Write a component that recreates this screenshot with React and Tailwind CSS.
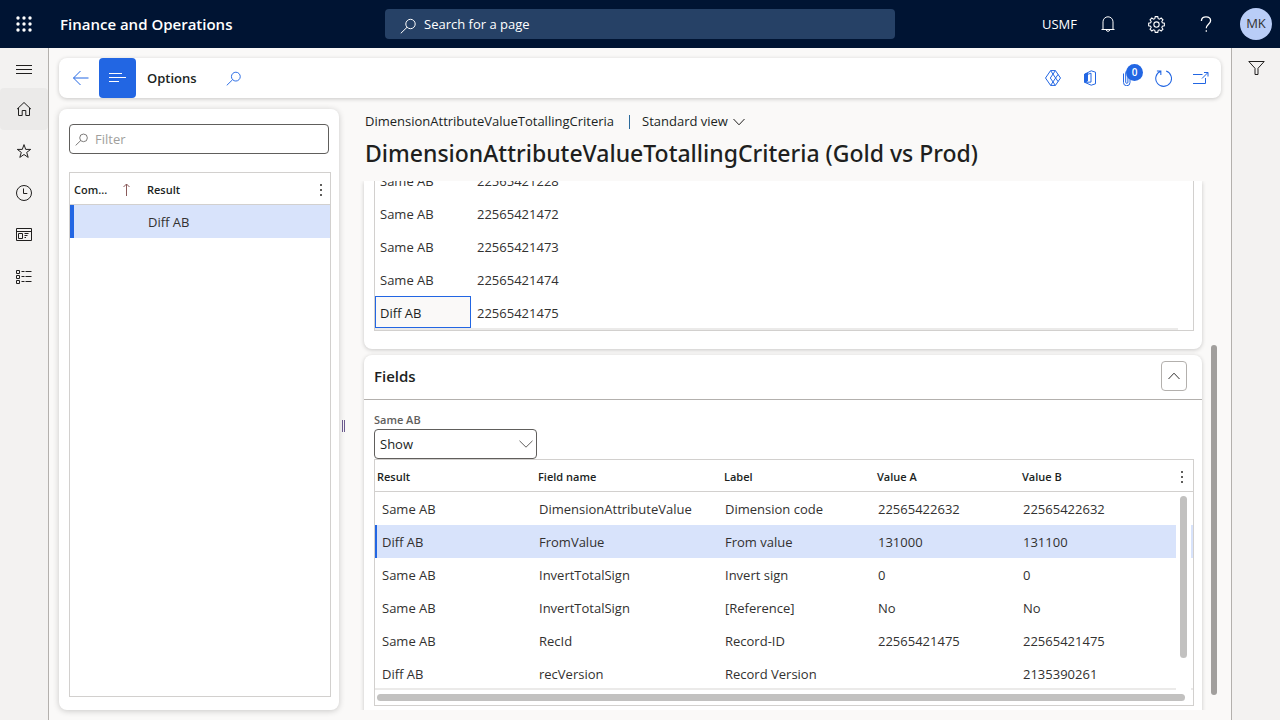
import React from "react";

const searchGlyph = (
  <>
    <circle cx="10.5" cy="6" r="4.7" />
    <path d="M7 9.3 0.8 15.3" />
  </>
);

function Icon({ children, className = "size-4", viewBox = "0 0 16 16" }) {
  return (
    <svg
      aria-hidden="true"
      viewBox={viewBox}
      fill="none"
      stroke="currentColor"
      strokeWidth="1"
      className={`shrink-0 ${className}`}
    >
      {children}
    </svg>
  );
}

const navItems = [
  {
    label: "Home",
    active: true,
    icon: <path d="M1 8.2 8 1.5l7 6.7M2.5 7v7.5h3.7v-5h3.6v5h3.7V7" />,
  },
  {
    label: "Favorites",
    icon: <path d="M8 1.6 9.7 6.4h5L10.7 9.4l1.5 5L8 11.5l-4.2 2.9 1.5-5-4-3h5Z" />,
  },
  {
    label: "Recent",
    icon: (
      <>
        <circle cx="8" cy="8" r="7.5" />
        <path d="M7.5 3.5v5h3.8" />
      </>
    ),
  },
  {
    label: "Workspaces",
    icon: <path d="M.5 1.5h15v12H.5ZM.5 4.5h15M2.5 6.5h4v5h-4ZM8.5 6.5h4M8.5 8.5h3M8.5 10.5h1.5" />,
  },
  {
    label: "Modules",
    icon: <path d="M.5 1.5h3v3h-3ZM.5 6.5h3v3h-3ZM.5 11.5h3v3h-3ZM5.5 2.5h3M9.5 2.5h6M5.5 7.5h3M9.5 7.5h6M5.5 12.5h3M9.5 12.5h6" />,
  },
];

const compareRows = [
  ["Same AB", "22565421228"],
  ["Same AB", "22565421472"],
  ["Same AB", "22565421473"],
  ["Same AB", "22565421474"],
];

const fieldRows = [
  ["Same AB", "DimensionAttributeValue", "Dimension code", "22565422632", "22565422632"],
  ["Diff AB", "FromValue", "From value", "131000", "131100"],
  ["Same AB", "InvertTotalSign", "Invert sign", "0", "0"],
  ["Same AB", "InvertTotalSign", "[Reference]", "No", "No"],
  ["Same AB", "RecId", "Record-ID", "22565421475", "22565421475"],
  ["Diff AB", "recVersion", "Record Version", "", "2135390261"],
];

function MoreDots() {
  return (
    <svg aria-hidden="true" viewBox="0 0 4 14" className="h-[14px] w-1 shrink-0 fill-[#605e5c]">
      <rect x="1" y="1" width="2" height="2" />
      <rect x="1" y="6" width="2" height="2" />
      <rect x="1" y="11" width="2" height="2" />
    </svg>
  );
}

function TopBar() {
  return (
    <header className="flex h-12 shrink-0 items-center bg-[#001433] text-white">
      <div className="flex flex-1 items-center">
        <button type="button" aria-label="App launcher" className="flex size-12 items-center justify-center">
          <svg viewBox="0 0 16 16" className="size-4 fill-white">
            {[2, 8, 14].map((y) =>
              [2, 8, 14].map((x) => <circle key={`${x}-${y}`} cx={x} cy={y} r="1.7" />)
            )}
          </svg>
        </button>
        <span className="pl-3 text-[15px] leading-5 font-semibold">Finance and Operations</span>
      </div>
      <label className="flex h-[30px] w-[40%] max-w-[510px] items-center gap-2 rounded bg-[#264166] px-[15px]">
        <Icon className="mt-1 size-4">{searchGlyph}</Icon>
        <input
          aria-label="Search for a page"
          placeholder="Search for a page"
          className="min-w-0 flex-1 bg-transparent pt-[2px] text-[13px] outline-none placeholder:text-white"
        />
      </label>
      <div className="flex flex-1 items-center justify-end text-[13px]">
        <button type="button" className="px-[6px] pt-[2px]">USMF</button>
        <button type="button" aria-label="Notifications" className="flex h-12 w-[49px] items-center justify-center">
          <Icon>
            <path d="M1.5 13.5h13M3 13.5V5.8a5 5 0 0 1 10 0v7.7M6.2 14a1.9 1.9 0 0 0 3.6 0" />
          </Icon>
        </button>
        <button type="button" aria-label="Settings" className="flex h-12 w-[49px] items-center justify-center">
          <Icon className="size-[17px]">
            <path d="M6.8.6h2.4l.4 1.9 1.2.5 1.6-1.1 1.7 1.7L13 5.2l.5 1.2 1.9.4v2.4l-1.9.4-.5 1.2 1.1 1.6-1.7 1.7-1.6-1.1-1.2.5-.4 1.9H6.8l-.4-1.9-1.2-.5-1.6 1.1-1.7-1.7L3 10.8l-.5-1.2-1.9-.4V6.8l1.9-.4L3 5.2 1.9 3.6l1.7-1.7L5.2 3l1.2-.5Z" />
            <circle cx="8" cy="8" r="2.5" />
          </Icon>
        </button>
        <button type="button" aria-label="Help" className="flex h-12 w-[49px] items-center justify-center">
          <Icon>
            <path
              strokeWidth="1.3"
              d="M3.4 5C3.4 2.2 5.4.8 8 .8s4.6 1.5 4.6 3.9c0 3-4.3 3.6-4.3 7.6M8.3 14.2v1.6"
            />
          </Icon>
        </button>
        <button type="button" className="mr-2 ml-[10px] flex size-8 items-center justify-center rounded-full bg-[#b9cdf7] text-[#323130]">
          MK
        </button>
      </div>
    </header>
  );
}

function SideNav() {
  return (
    <nav className="flex w-[49px] shrink-0 flex-col border-r border-[#b3b0ad] bg-[#f3f2f1] text-[#201f1e]">
      <button type="button" aria-label="Expand the navigation pane" className="flex h-10 items-center justify-center">
        <Icon>
          <path d="M0 5.5h16M0 9.5h16M0 13.5h16" />
        </Icon>
      </button>
      {navItems.map((item) => (
        <button
          key={item.label}
          type="button"
          aria-label={item.label}
          className={`flex h-[42px] items-center justify-center rounded ${item.active ? "bg-[#ebeae9]" : ""}`}
        >
          <Icon>{item.icon}</Icon>
        </button>
      ))}
    </nav>
  );
}

function ActionBar() {
  const button = "flex h-10 w-[37px] items-center justify-center";
  return (
    <div className="flex h-10 shrink-0 items-center rounded-lg bg-white pr-[2px] pl-[3px] text-[#2266e3] shadow-[0_1px_4px_rgba(0,0,0,0.2)]">
      <button type="button" aria-label="Back" className={button}>
        <Icon>
          <path d="M15.5 8H.5M7.5 1 .5 8l7 7" />
        </Icon>
      </button>
      <button type="button" aria-label="Show list" className={`${button} rounded bg-[#2266e3] text-white`}>
        <Icon className="h-4 w-[18px]" viewBox="0 0 18 16">
          <path d="M0 3.5h13M0 7.5h17M0 11.5h10" />
        </Icon>
      </button>
      <button type="button" className="px-[11px] pt-[2px] text-[13px] font-semibold text-[#201f1e]">Options</button>
      <button type="button" aria-label="Search actions" className="ml-[10px] flex h-10 w-8 items-center justify-center">
        <Icon className="size-[15px]">{searchGlyph}</Icon>
      </button>
      <div className="ml-auto flex items-center">
        <button type="button" aria-label="Power Apps" className={button}>
          <Icon>
            <path d="M5.6.6h4.8L15.5 8l-5.1 7.4H5.6L.5 8ZM10.4.6 5.3 8l5.1 7.4M5.6.6l7.4 10.9M5.6 15.4 13 4.5" />
          </Icon>
        </button>
        <button type="button" aria-label="Open in Microsoft Office" className={button}>
          <Icon>
            <path d="M2.5 4.3 9.2.8l4.3 1.4v11.6l-4.3 1.4-6.5-2.9 6.3-.2V3.2L5.5 4.4v6.4l-3 1.3Z" />
            <path d="M2.5 4.3 5.5 3v7.8l-3 1.3Z" fill="currentColor" />
          </Icon>
        </button>
        <button type="button" aria-label="Attachments" className={`${button} relative`}>
          <Icon>
            <path d="M4.5 3.5v9a3.2 3.2 0 0 0 6.5 0V2.8a2 2 0 0 0-4.3 0v9.4a1 1 0 0 0 2.2 0V4" />
          </Icon>
          <span className="absolute top-[6px] right-[2px] flex size-[17px] items-center justify-center rounded-full bg-[#2266e3] text-[10px] font-semibold text-white">
            0
          </span>
        </button>
        <button type="button" aria-label="Refresh" className={button}>
          <Icon className="size-[17px]">
            <path d="M10.5 1a7.4 7.4 0 1 1-5.3.2M1.8.9h3.7v3.8" />
          </Icon>
        </button>
        <button type="button" aria-label="Open in new window" className={button}>
          <Icon>
            <path d="M9.5 4.5h-10v9h13V8M9 8.5l5.8-5.8M11 2.5h4v4" />
          </Icon>
        </button>
      </div>
    </div>
  );
}

function ListPane() {
  return (
    <section className="flex w-[280px] shrink-0 flex-col gap-[18px] rounded-lg bg-white pt-[15px] pr-2 pb-[13px] pl-[10px] shadow-[0_1px_6px_rgba(0,0,0,0.2)]">
      <label className="mr-[2px] flex h-[30px] items-center gap-[7px] rounded border border-[#605e5c] px-[5px] text-[#605e5c]">
        <Icon className="size-[13px]">{searchGlyph}</Icon>
        <input
          aria-label="Filter"
          placeholder="Filter"
          className="min-w-0 flex-1 bg-transparent pt-[2px] text-[13px] outline-none placeholder:text-[#a19f9d]"
        />
      </label>
      <div className="flex-1 border border-[#d2d0ce]">
        <table className="w-full table-fixed text-left">
          <colgroup>
            <col className="w-[75px]" />
            <col />
          </colgroup>
          <thead>
            <tr className="h-8 text-[11px] font-semibold text-[#201f1e] shadow-[inset_0_-1px_0_#d2d0ce]">
              <th className="pt-[2px] pr-[15px] pb-0 pl-1 font-semibold">
                <span className="flex items-center justify-between">
                  Com...
                  <Icon className="h-[13px] w-[7px] text-[#8a5a5a]" viewBox="0 0 7 13">
                    <path d="M3.5 12V0M.5 3l3-3 3 3" />
                  </Icon>
                </span>
              </th>
              <th className="pt-[2px] pr-[7px] pb-0 pl-[2px] font-semibold">
                <span className="flex items-center justify-between">
                  Result
                  <MoreDots />
                </span>
              </th>
            </tr>
          </thead>
          <tbody>
            <tr className="h-[33px] bg-[#d8e3fb] text-[13px] text-[#323130]">
              <td className="p-0 shadow-[inset_4px_0_0_#2266e3]" />
              <td className="pt-[2px] pb-0 pl-[3px]">Diff AB</td>
            </tr>
          </tbody>
        </table>
      </div>
    </section>
  );
}

function CompareCard() {
  return (
    <section className="shrink-0 rounded-b-lg bg-white px-[10px] pr-2 pb-[18px] shadow-[0_1px_4px_rgba(0,0,0,0.2)]">
      <div className="relative flex h-[150px] flex-col justify-end overflow-hidden border-x border-b border-[#d2d0ce] pb-px">
        <table className="w-full shrink-0 table-fixed text-left text-[13px] text-[#323130]">
          <colgroup>
            <col className="w-24" />
            <col />
          </colgroup>
          <tbody>
            {compareRows.map(([result, id]) => (
              <tr key={id} className="h-[33px]">
                <td className="pt-[2px] pb-0 pl-[5px]">{result}</td>
                <td className="pt-[2px] pb-0 pl-[6px]">{id}</td>
              </tr>
            ))}
            <tr className="h-[33px]">
              <td className="p-0 align-top">
                <input
                  aria-label="Result"
                  defaultValue="Diff AB"
                  className="block h-8 w-full border border-[#2266e3] bg-[#faf9f8] px-1 pt-[2px] text-[#201f1e] outline-none"
                />
              </td>
              <td className="pt-[2px] pb-0 pl-[6px]">22565421475</td>
            </tr>
          </tbody>
        </table>
        <div className="absolute right-[15px] bottom-0 left-0 h-[2px] bg-[#ebeae9]" />
      </div>
    </section>
  );
}

function FieldsCard() {
  return (
    <section className="shrink-0 rounded-t-lg bg-white pb-5 shadow-[0_1px_4px_rgba(0,0,0,0.2)]">
      <div className="flex h-[45px] items-center justify-between border-b border-[#b3b0ad] pr-[15px] pb-[2px] pl-[10px]">
        <h2 className="text-[15px] leading-5 font-semibold text-[#201f1e]">Fields</h2>
        <button
          type="button"
          aria-label="Collapse Fields"
          className="flex h-[30px] w-[26px] items-center justify-center rounded border border-[#b3b0ad] text-[#323130]"
        >
          <Icon className="h-2 w-3" viewBox="0 0 12 8">
            <path d="M.5 7 6 1.2 11.5 7" />
          </Icon>
        </button>
      </div>
      <div className="pt-[11px] pr-2 pl-[10px]">
        <label htmlFor="same-ab" className="block text-[11px] leading-[18px] font-semibold text-[#605e5c]">
          Same AB
        </label>
        <div className="relative w-[163px]">
          <select
            id="same-ab"
            className="block h-[30px] w-full appearance-none rounded border border-[#605e5c] bg-white pt-[2px] pr-6 pl-[5px] text-[13px] text-[#201f1e]"
          >
            <option>Show</option>
            <option>Hide</option>
          </select>
          <Icon
            className="pointer-events-none absolute top-[11px] right-1 h-2 w-[14px] text-[#605e5c]"
            viewBox="0 0 14 8"
          >
            <path d="M.5.8 7 7.2 13.5.8" />
          </Icon>
        </div>
        <div className="relative border border-[#d2d0ce] pb-[15px]">
          <table className="w-full table-fixed text-left">
            <colgroup>
              <col className="w-[161px]" />
              <col className="w-[186px]" />
              <col className="w-[153px]" />
              <col className="w-[145px]" />
              <col />
            </colgroup>
            <thead>
              <tr className="h-8 text-[11px] text-[#201f1e] shadow-[inset_0_-1px_0_#d2d0ce]">
                <th className="pt-[2px] pb-0 pl-[2px] font-semibold">Result</th>
                <th className="pt-[2px] pb-0 pl-[2px] font-semibold">Field name</th>
                <th className="pt-[2px] pb-0 pl-[2px] font-semibold">Label</th>
                <th className="pt-[2px] pb-0 pl-[2px] font-semibold">Value A</th>
                <th className="pt-[2px] pr-[9px] pb-0 pl-[2px] font-semibold">
                  <span className="flex items-center justify-between">
                    Value B
                    <MoreDots />
                  </span>
                </th>
              </tr>
            </thead>
            <tbody className="text-[13px] text-[#323130]">
              {fieldRows.map((row, i) => (
                <tr key={i} className={`h-[33px] ${i === 1 ? "bg-[#d8e3fb]" : ""}`}>
                  {row.map((value, j) => (
                    <td
                      key={j}
                      className={`pt-[2px] pr-0 pb-0 ${j > 0 ? "pl-[3px]" : "pl-[7px]"} ${
                        i === 1 && j === 0 ? "shadow-[inset_2px_0_0_#2266e3]" : ""
                      }`}
                    >
                      {value}
                    </td>
                  ))}
                </tr>
              ))}
            </tbody>
          </table>
          <div className="absolute right-0 bottom-[15px] left-0 h-[2px] bg-[#ebeae9]" />
          <div className="absolute top-8 right-[2px] bottom-[15px] w-[15px] bg-white px-1 pt-1">
            <div className="h-[162px] w-[7px] rounded-full bg-[#c2c1c0]" />
          </div>
          <div className="absolute right-2 bottom-1 left-[2px] h-[7px] rounded-full bg-[#c2c1c0]" />
        </div>
      </div>
    </section>
  );
}

export default function App() {
  return (
    <div className="flex h-screen flex-col overflow-hidden bg-[#faf9f8] font-['Segoe_UI','Open_Sans','Noto_Sans',sans-serif]">
      <TopBar />
      <div className="flex min-h-0 flex-1">
        <SideNav />
        <main className="flex min-w-0 flex-1 flex-col gap-[11px] p-[10px]">
          <ActionBar />
          <div className="flex min-h-0 flex-1">
            <ListPane />
            <div className="flex w-[21px] shrink-0 items-center pt-[33px] pl-[3px]">
              <div className="h-3 w-[3px] border-x border-[#6b5a8e]" />
            </div>
            <div className="flex min-w-0 flex-1 flex-col">
              <div className="pl-[5px] text-[13px] text-[#201f1e]">
                <div className="flex h-[26px] items-center">
                  <span>DimensionAttributeValueTotallingCriteria</span>
                  <span className="mr-3 ml-[15px] h-[14px] w-px bg-[#2b6a9b]" />
                  <button type="button" className="flex items-center gap-[5px]">
                    Standard view
                    <Icon className="h-2 w-3" viewBox="0 0 12 8">
                      <path d="M.5 1 6 6.8 11.5 1" />
                    </Icon>
                  </button>
                </div>
                <h1 className="pt-[2px] pb-3 font-['Segoe_UI','Noto_Sans','Open_Sans',sans-serif] text-[23px] leading-8 font-medium">
                  DimensionAttributeValueTotallingCriteria (Gold vs Prod)
                </h1>
              </div>
              <div className="flex min-h-0 flex-1">
                <div className="flex min-w-0 flex-1 flex-col gap-[6px] overflow-hidden px-1">
                  <CompareCard />
                  <FieldsCard />
                </div>
                <div className="flex w-[15px] flex-col pb-[15px] pl-[5px]">
                  <div className="mt-auto h-[68%] w-[6px] rounded-full bg-[#a19f9d]" />
                </div>
              </div>
            </div>
          </div>
        </main>
        <aside className="flex w-[49px] shrink-0 flex-col items-center border-l border-[#b3b0ad] bg-[#f3f2f1] pt-3">
          <button type="button" aria-label="Filters" className="text-[#201f1e]">
            <Icon className="h-4 w-[17px]" viewBox="0 0 17 16">
              <path d="M.8 1.5h15.4L10 8.3v6.2H7V8.3Z" />
            </Icon>
          </button>
        </aside>
      </div>
    </div>
  );
}
